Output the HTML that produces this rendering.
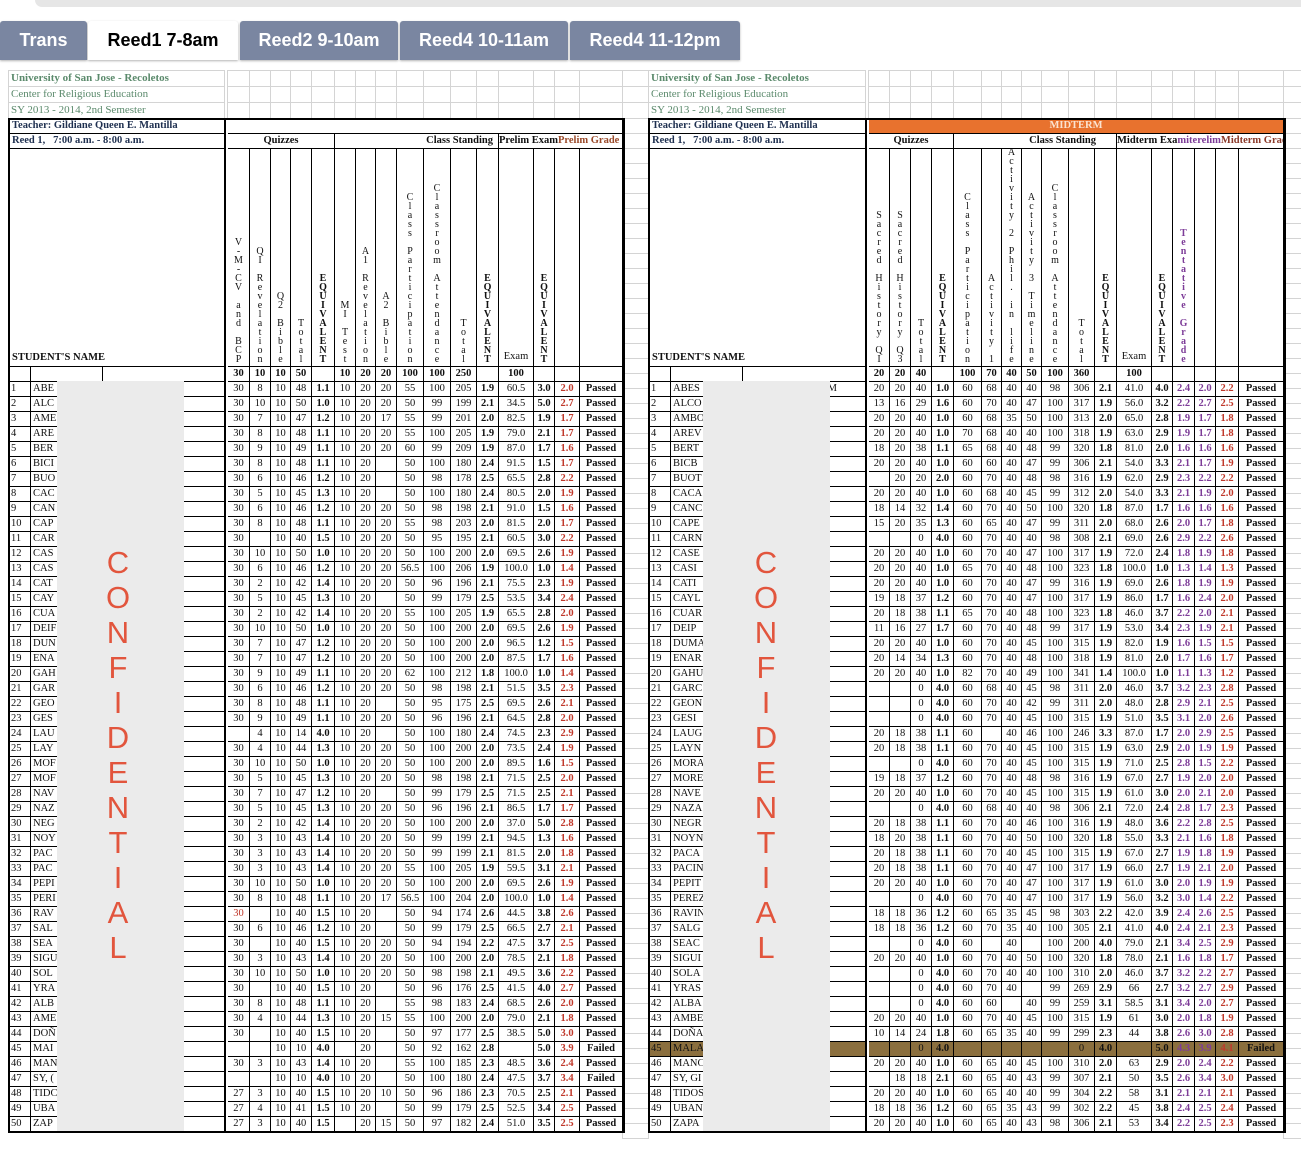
<!DOCTYPE html>
<html><head><meta charset="utf-8">
<style>
html,body{margin:0;padding:0;background:#fff;}
body{width:1301px;height:1165px;position:relative;overflow:hidden;font-family:"Liberation Serif",serif;}
.c{position:absolute;box-sizing:border-box;font-size:10.5px;line-height:14px;text-align:center;white-space:nowrap;overflow:visible;color:#111;}
.b{border:1px solid #000;}
.g{border:1px solid #d4d4d4;}
.bd{font-weight:bold;}
.red{color:#c0392b;font-weight:bold;}
.pur{color:#7d3c98;font-weight:bold;}
.vt{font-size:10px;position:absolute;bottom:2px;left:0;right:0;text-align:center;}
.vt div{height:9px;line-height:9px;}
.tab{position:absolute;top:21px;height:39px;background:#7a86a1;color:#fff;font-family:"Liberation Sans",sans-serif;font-weight:bold;font-size:18px;line-height:39px;text-align:center;border-radius:3px 3px 0 0;box-shadow:0 1px 2px rgba(0,0,0,.3);}
.conf{position:absolute;color:#e2553d;font-family:"Liberation Sans",sans-serif;font-size:31px;line-height:35px;width:40px;text-align:center;}
.hdr{position:absolute;font-size:11px;line-height:16px;white-space:nowrap;}
</style></head><body>
<div style="position:absolute;left:35px;top:0;width:1266px;height:7px;background:#e6e6e6;border-radius:0 0 0 12px"></div>
<div class="tab" style="left:0;width:87px">Trans</div>
<div class="tab" style="left:88px;width:150px;background:#fff;color:#000">Reed1 7-8am</div>
<div class="tab" style="left:240px;width:158px">Reed2 9-10am</div>
<div class="tab" style="left:400px;width:168px">Reed4 10-11am</div>
<div class="tab" style="left:570px;width:170px">Reed4 11-12pm</div>
<div id="root"></div>
<script>
var R=document.getElementById('root');var H='';
function cell(x1,y1,x2,y2,t,cls,st){H+='<div class="c '+(cls||'')+'" style="left:'+x1+'px;top:'+y1+'px;width:'+(x2-x1+1)+'px;height:'+(y2-y1+1)+'px;'+(st||'')+'">'+(t||'')+'</div>';}
var L={n:[8,30,102,224],d:[227,249,270,290,311,334,355,375,396,423,450,476,498,533,554,579,622],eq:[4,11,13],red:[14],pur:[],rem:15,
vt:["V-M-CV and BCP","QI Revelation","Q2 Bible","Total","EQUIVALENT","MI Test","A1 Revelation","A2 Bible","Class Participation","Classroom Attendance","Total","EQUIVALENT","","EQUIVALENT","",""],
tot:["30","10","10","50","","10","20","20","100","100","250","","100","","",""],
rows:[
"ABE|SE M|30 8 10 48 1.1 10 20 20 55 100 205 1.9 60.5 3.0 2.0 Passed",
"ALC||30 10 10 50 1.0 10 20 20 50 99 199 2.1 34.5 5.0 2.7 Passed",
"AME||30 7 10 47 1.2 10 20 17 55 99 201 2.0 82.5 1.9 1.7 Passed",
"ARE||30 8 10 48 1.1 10 20 20 55 100 205 1.9 79.0 2.1 1.7 Passed",
"BER||30 9 10 49 1.1 10 20 20 60 99 209 1.9 87.0 1.7 1.6 Passed",
"BICI||30 8 10 48 1.1 10 20 _ 50 100 180 2.4 91.5 1.5 1.7 Passed",
"BUO||30 6 10 46 1.2 10 20 _ 50 98 178 2.5 65.5 2.8 2.2 Passed",
"CAC||30 5 10 45 1.3 10 20 _ 50 100 180 2.4 80.5 2.0 1.9 Passed",
"CAN||30 6 10 46 1.2 10 20 20 50 98 198 2.1 91.0 1.5 1.6 Passed",
"CAP||30 8 10 48 1.1 10 20 20 55 98 203 2.0 81.5 2.0 1.7 Passed",
"CAR||30 _ 10 40 1.5 10 20 20 50 95 195 2.1 60.5 3.0 2.2 Passed",
"CAS||30 10 10 50 1.0 10 20 20 50 100 200 2.0 69.5 2.6 1.9 Passed",
"CAS||30 6 10 46 1.2 10 20 20 56.5 100 206 1.9 100.0 1.0 1.4 Passed",
"CAT||30 2 10 42 1.4 10 20 20 50 96 196 2.1 75.5 2.3 1.9 Passed",
"CAY||30 5 10 45 1.3 10 20 _ 50 99 179 2.5 53.5 3.4 2.4 Passed",
"CUA||30 2 10 42 1.4 10 20 20 55 100 205 1.9 65.5 2.8 2.0 Passed",
"DEIF||30 10 10 50 1.0 10 20 20 50 100 200 2.0 69.5 2.6 1.9 Passed",
"DUN||30 7 10 47 1.2 10 20 20 50 100 200 2.0 96.5 1.2 1.5 Passed",
"ENA||30 7 10 47 1.2 10 20 20 50 100 200 2.0 87.5 1.7 1.6 Passed",
"GAH|G|30 9 10 49 1.1 10 20 20 62 100 212 1.8 100.0 1.0 1.4 Passed",
"GAR||30 6 10 46 1.2 10 20 20 50 98 198 2.1 51.5 3.5 2.3 Passed",
"GEO||30 8 10 48 1.1 10 20 _ 50 95 175 2.5 69.5 2.6 2.1 Passed",
"GES||30 9 10 49 1.1 10 20 20 50 96 196 2.1 64.5 2.8 2.0 Passed",
"LAU||_ 4 10 14 4.0 10 20 _ 50 100 180 2.4 74.5 2.3 2.9 Passed",
"LAY||30 4 10 44 1.3 10 20 20 50 100 200 2.0 73.5 2.4 1.9 Passed",
"MOF||30 10 10 50 1.0 10 20 20 50 100 200 2.0 89.5 1.6 1.5 Passed",
"MOF||30 5 10 45 1.3 10 20 20 50 98 198 2.1 71.5 2.5 2.0 Passed",
"NAV||30 7 10 47 1.2 10 20 _ 50 99 179 2.5 71.5 2.5 2.1 Passed",
"NAZ||30 5 10 45 1.3 10 20 20 50 96 196 2.1 86.5 1.7 1.7 Passed",
"NEG||30 2 10 42 1.4 10 20 20 50 100 200 2.0 37.0 5.0 2.8 Passed",
"NOY||30 3 10 43 1.4 10 20 20 50 99 199 2.1 94.5 1.3 1.6 Passed",
"PAC||30 3 10 43 1.4 10 20 20 50 99 199 2.1 81.5 2.0 1.8 Passed",
"PAC||30 3 10 43 1.4 10 20 20 55 100 205 1.9 59.5 3.1 2.1 Passed",
"PEPI||30 10 10 50 1.0 10 20 20 50 100 200 2.0 69.5 2.6 1.9 Passed",
"PERI||30 8 10 48 1.1 10 20 17 56.5 100 204 2.0 100.0 1.0 1.4 Passed",
"RAV||30 _ 10 40 1.5 10 20 _ 50 94 174 2.6 44.5 3.8 2.6 Passed",
"SAL||30 6 10 46 1.2 10 20 _ 50 99 179 2.5 66.5 2.7 2.1 Passed",
"SEA||30 _ 10 40 1.5 10 20 20 50 94 194 2.2 47.5 3.7 2.5 Passed",
"SIGU||30 3 10 43 1.4 10 20 20 50 100 200 2.0 78.5 2.1 1.8 Passed",
"SOL||30 10 10 50 1.0 10 20 20 50 98 198 2.1 49.5 3.6 2.2 Passed",
"YRA||30 _ 10 40 1.5 10 20 _ 50 96 176 2.5 41.5 4.0 2.7 Passed",
"ALB||30 8 10 48 1.1 10 20 _ 55 98 183 2.4 68.5 2.6 2.0 Passed",
"AME||30 4 10 44 1.3 10 20 15 55 100 200 2.0 79.0 2.1 1.8 Passed",
"DOÑ||30 _ 10 40 1.5 10 20 _ 50 97 177 2.5 38.5 5.0 3.0 Passed",
"MAI||_ _ 10 10 4.0 _ 20 _ 50 92 162 2.8 _ 5.0 3.9 Failed",
"MAN|D|30 3 10 43 1.4 10 20 _ 55 100 185 2.3 48.5 3.6 2.4 Passed",
"SY, (||_ _ 10 10 4.0 10 20 _ 50 100 180 2.4 47.5 3.7 3.4 Failed",
"TIDC||27 3 10 40 1.5 10 20 10 50 96 186 2.3 70.5 2.5 2.1 Passed",
"UBA||27 4 10 41 1.5 10 20 _ 50 99 179 2.5 52.5 3.4 2.5 Passed",
"ZAP|M|27 3 10 40 1.5 _ 20 15 50 97 182 2.4 51.0 3.5 2.5 Passed"]};
var Rr={n:[648,670,742,865],d:[868,889,910,931,953,981,1001,1021,1041,1068,1094,1116,1151,1172,1194,1215,1238,1283],eq:[3,10,12],red:[15],pur:[13,14],rem:16,
vt:["Sacred History QI","Sacred History Q3","Total","EQUIVALENT","Class Participation","Activity 1","Activity 2 Phil. in life","Activity 3 Timeline","Classroom Attendance","Total","EQUIVALENT","","EQUIVALENT","Tentative Grade","","",""],
tot:["20","20","40","","100","70","40","50","100","360","","100","","","","",""],
rows:[
"ABES|E M|20 20 40 1.0 60 68 40 40 98 306 2.1 41.0 4.0 2.4 2.0 2.2 Passed",
"ALCO||13 16 29 1.6 60 70 40 47 100 317 1.9 56.0 3.2 2.2 2.7 2.5 Passed",
"AMBO||20 20 40 1.0 60 68 35 50 100 313 2.0 65.0 2.8 1.9 1.7 1.8 Passed",
"AREV||20 20 40 1.0 70 68 40 40 100 318 1.9 63.0 2.9 1.9 1.7 1.8 Passed",
"BERT||18 20 38 1.1 65 68 40 48 99 320 1.8 81.0 2.0 1.6 1.6 1.6 Passed",
"BICB||20 20 40 1.0 60 60 40 47 99 306 2.1 54.0 3.3 2.1 1.7 1.9 Passed",
"BUOT||_ 20 20 2.0 60 70 40 48 98 316 1.9 62.0 2.9 2.3 2.2 2.2 Passed",
"CACA||20 20 40 1.0 60 68 40 45 99 312 2.0 54.0 3.3 2.1 1.9 2.0 Passed",
"CANC||18 14 32 1.4 60 70 40 50 100 320 1.8 87.0 1.7 1.6 1.6 1.6 Passed",
"CAPE||15 20 35 1.3 60 65 40 47 99 311 2.0 68.0 2.6 2.0 1.7 1.8 Passed",
"CARN||_ _ 0 4.0 60 70 40 40 98 308 2.1 69.0 2.6 2.9 2.2 2.6 Passed",
"CASE||20 20 40 1.0 60 70 40 47 100 317 1.9 72.0 2.4 1.8 1.9 1.8 Passed",
"CASI||20 20 40 1.0 65 70 40 48 100 323 1.8 100.0 1.0 1.3 1.4 1.3 Passed",
"CATI||20 20 40 1.0 60 70 40 47 99 316 1.9 69.0 2.6 1.8 1.9 1.9 Passed",
"CAYL||19 18 37 1.2 60 70 40 47 100 317 1.9 86.0 1.7 1.6 2.4 2.0 Passed",
"CUAR||20 18 38 1.1 65 70 40 48 100 323 1.8 46.0 3.7 2.2 2.0 2.1 Passed",
"DEIP||11 16 27 1.7 60 70 40 48 99 317 1.9 53.0 3.4 2.3 1.9 2.1 Passed",
"DUMA||20 20 40 1.0 60 70 40 45 100 315 1.9 82.0 1.9 1.6 1.5 1.5 Passed",
"ENAR||20 14 34 1.3 60 70 40 48 100 318 1.9 81.0 2.0 1.7 1.6 1.7 Passed",
"GAHU||20 20 40 1.0 82 70 40 49 100 341 1.4 100.0 1.0 1.1 1.3 1.2 Passed",
"GARC||_ _ 0 4.0 60 68 40 45 98 311 2.0 46.0 3.7 3.2 2.3 2.8 Passed",
"GEON||_ _ 0 4.0 60 70 40 42 99 311 2.0 48.0 2.8 2.9 2.1 2.5 Passed",
"GESI||_ _ 0 4.0 60 70 40 45 100 315 1.9 51.0 3.5 3.1 2.0 2.6 Passed",
"LAUG||20 18 38 1.1 60 _ 40 46 100 246 3.3 87.0 1.7 2.0 2.9 2.5 Passed",
"LAYN||20 18 38 1.1 60 70 40 45 100 315 1.9 63.0 2.9 2.0 1.9 1.9 Passed",
"MORA||_ _ 0 4.0 60 70 40 45 100 315 1.9 71.0 2.5 2.8 1.5 2.2 Passed",
"MORE||19 18 37 1.2 60 70 40 48 98 316 1.9 67.0 2.7 1.9 2.0 2.0 Passed",
"NAVE||20 20 40 1.0 60 70 40 45 100 315 1.9 61.0 3.0 2.0 2.1 2.0 Passed",
"NAZA||_ _ 0 4.0 60 68 40 40 98 306 2.1 72.0 2.4 2.8 1.7 2.3 Passed",
"NEGR||20 18 38 1.1 60 70 40 46 100 316 1.9 48.0 3.6 2.2 2.8 2.5 Passed",
"NOYN||18 20 38 1.1 60 70 40 50 100 320 1.8 55.0 3.3 2.1 1.6 1.8 Passed",
"PACA||20 18 38 1.1 60 70 40 45 100 315 1.9 67.0 2.7 1.9 1.8 1.9 Passed",
"PACIN||20 18 38 1.1 60 70 40 47 100 317 1.9 66.0 2.7 1.9 2.1 2.0 Passed",
"PEPIT||20 20 40 1.0 60 70 40 47 100 317 1.9 61.0 3.0 2.0 1.9 1.9 Passed",
"PEREZ||_ _ 0 4.0 60 70 40 47 100 317 1.9 56.0 3.2 3.0 1.4 2.2 Passed",
"RAVIN||18 18 36 1.2 60 65 35 45 98 303 2.2 42.0 3.9 2.4 2.6 2.5 Passed",
"SALG||18 18 36 1.2 60 70 35 40 100 305 2.1 41.0 4.0 2.4 2.1 2.3 Passed",
"SEAC||_ _ 0 4.0 60 _ 40 _ 100 200 4.0 79.0 2.1 3.4 2.5 2.9 Passed",
"SIGUI||20 20 40 1.0 60 70 40 50 100 320 1.8 78.0 2.1 1.6 1.8 1.7 Passed",
"SOLA||_ _ 0 4.0 60 70 40 40 100 310 2.0 46.0 3.7 3.2 2.2 2.7 Passed",
"YRAS||_ _ 0 4.0 60 70 40 _ 99 269 2.9 66 2.7 3.2 2.7 2.9 Passed",
"ALBA||_ _ 0 4.0 60 60 _ 40 99 259 3.1 58.5 3.1 3.4 2.0 2.7 Passed",
"AMBE||20 20 40 1.0 60 70 40 45 100 315 1.9 61 3.0 2.0 1.8 1.9 Passed",
"DOÑA||10 14 24 1.8 60 65 35 40 99 299 2.3 44 3.8 2.6 3.0 2.8 Passed",
"MALA||_ _ 0 4.0 _ _ _ _ _ 0 4.0 _ 5.0 4.3 3.9 4.1 Failed",
"MANC||20 20 40 1.0 60 65 40 45 100 310 2.0 63 2.9 2.0 2.4 2.2 Passed",
"SY, GI||_ 18 18 2.1 60 65 40 43 99 307 2.1 50 3.5 2.6 3.4 3.0 Passed",
"TIDOS||20 20 40 1.0 60 65 40 40 99 304 2.2 58 3.1 2.1 2.1 2.1 Passed",
"UBAN||18 18 36 1.2 60 65 35 43 99 302 2.2 45 3.8 2.4 2.5 2.4 Passed",
"ZAPA||20 20 40 1.0 60 65 40 43 98 306 2.1 53 3.4 2.2 2.5 2.3 Passed"]};
function stack(t){var s='';for(var k=0;k<t.length;k++){var ch=t[k];s+='<div>'+(ch==' '?'&nbsp;':ch)+'</div>';}return s;}
function panel(P,right){
 var n=P.n,d=P.d,x0=n[0],xe=d[d.length-1];
 for(var r=0;r<3;r++){var y=70+r*16;cell(x0,y,n[3],y+16,'','g');for(var i=0;i<d.length-1;i++)cell(d[i],y,d[i+1],y+16,'','g');cell(xe,y,xe+26,y+16,'','g');}
 H+='<div class="hdr" style="left:'+(x0+3)+'px;top:70px;color:#5b8a6c;font-weight:bold">University of San Jose - Recoletos</div>';
 H+='<div class="hdr" style="left:'+(x0+3)+'px;top:86px;color:#5b8a6c">Center for Religious Education</div>';
 H+='<div class="hdr" style="left:'+(x0+3)+'px;top:102px;color:#5b8a6c">SY 2013 - 2014, 2nd Semester</div>';
 for(var y=118;y<1130;y+=15)cell(xe,y,xe+26,y+15,'','g');
 cell(x0,118,n[3],133,'<span style="float:left;padding-left:3px;color:#1f3050">Teacher: Gildiane Queen E. Mantilla</span>','b bd');
 if(right)cell(d[0],118,xe,133,'MIDTERM','b bd','background:#e8722e;color:#fbe3d0;');else cell(d[0],118,xe,133,'','b');
 cell(x0,133,n[3],148,'<span style="float:left;padding-left:3px;color:#1f3050">Reed 1,&nbsp;&nbsp; 7:00 a.m. - 8:00 a.m.</span>','b bd');
 var qe=right?d[4]:d[5];
 cell(d[0],133,qe,148,'Quizzes','b bd');
 var ee=right?d[11]:d[12];
 cell(qe,133,ee,148,'Class Standing','b bd','text-align:right;padding-right:'+(right?20:5)+'px');
 if(right){cell(ee,133,xe,148,'<span>Midterm Exa</span><span style="color:#7d3c98">mite</span><span style="color:#7d3c98">relim</span><span style="color:#8b3a2a">Midterm Grade</span>','b bd','text-align:left;overflow:hidden');}
 else{cell(ee,133,xe,148,'<span>Prelim Exam</span><span style="color:#9a4a2a">Prelim Grade</span>','b bd','text-align:left;overflow:hidden');}
 cell(x0,148,n[3],366,'<span style="position:absolute;left:3px;bottom:1px">STUDENT\'S NAME</span>','b bd');
 for(var i=0;i<d.length-1;i++){var t=P.vt[i],inner='';
  if(t==='')inner=(i==(right?11:12))?'<span style="position:absolute;bottom:2px;left:0;right:0;text-align:center">Exam</span>':'';
  else inner='<div class="vt" style="'+(t=='EQUIVALENT'?'font-weight:bold;':'')+(t=='Tentative Grade'?'color:#7d3c98;font-weight:bold;':'')+'">'+stack(t)+'</div>';
  cell(d[i],148,d[i+1],366,inner,'b','overflow:hidden');}
 cell(n[0],366,n[1],381,'','b');cell(n[1],366,n[2],381,'','b');cell(n[2],366,n[3],381,'','b');
 for(var i=0;i<d.length-1;i++)cell(d[i],366,d[i+1],381,P.tot[i],'b bd');
 for(var r=0;r<50;r++){var y=381+r*15,parts=P.rows[r].split('|'),vals=parts[2].split(' ');
  var brown=(right&&r==44);var bg=brown?'background:#8b6f3e;':'';
  cell(n[0],y,n[1],y+15,String(r+1),'b','text-align:left;padding-left:2px;'+bg);
  cell(n[1],y,n[2],y+15,parts[0],'b','text-align:left;padding-left:2px;'+bg);
  cell(n[2],y,n[3],y+15,parts[1],'b','text-align:right;padding-right:'+(right?28:40)+'px;'+bg);
  for(var i=0;i<d.length-1;i++){var v=vals[i]||'_';if(v=='_')v='';var cls='b';
   if(P.eq.indexOf(i)>=0)cls+=' bd';if(P.red.indexOf(i)>=0)cls+=' red';if(P.pur.indexOf(i)>=0)cls+=' pur';if(i==P.rem)cls+=' bd';
   var st=bg;if(!right&&r==35&&i==0)st+='color:#c0392b;';
   cell(d[i],y,d[i+1],y+15,v,cls,st);}
 }
 H+='<div style="position:absolute;left:'+(n[3]+1)+'px;top:118px;width:2px;height:1013px;background:#fff;border-left:1px solid #000"></div>';
 H+='<div style="position:absolute;left:'+x0+'px;top:118px;width:'+(xe-x0-1)+'px;height:1011px;border:2px solid #000;box-sizing:content-box;pointer-events:none"></div>';
 var gx=right?703:57;H+='<div style="position:absolute;left:'+gx+'px;top:381px;width:127px;height:750px;background:#ebebeb"></div>';
 var cx=right?746:98,word='CONFIDENTIAL';
 for(var k=0;k<word.length;k++)H+='<div class="conf" style="left:'+cx+'px;top:'+(545+k*35)+'px">'+word[k]+'</div>';
}
panel(L,false);panel(Rr,true);
R.innerHTML=H;
</script>
</body></html>
